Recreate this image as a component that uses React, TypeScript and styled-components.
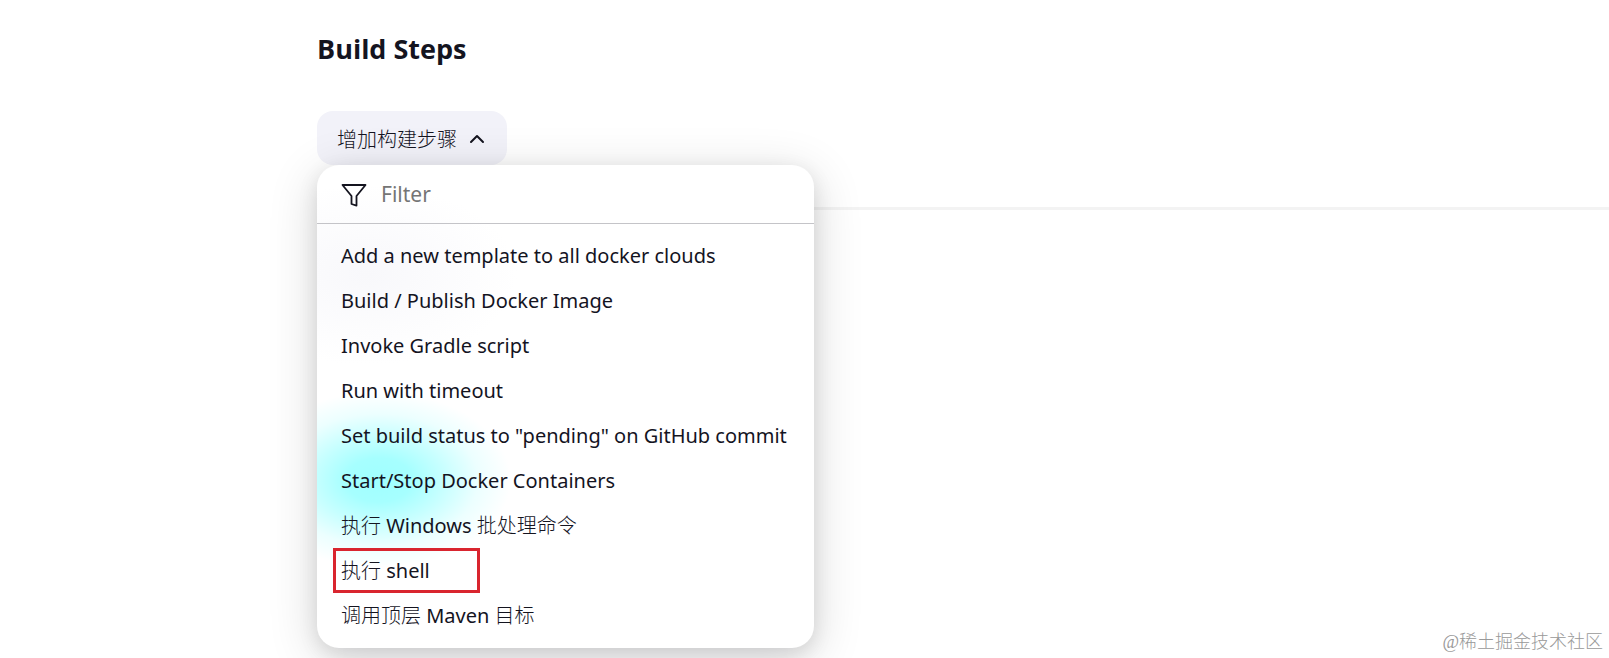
import React, { useState } from "react";
import styled, { createGlobalStyle } from "styled-components";

const GlobalStyle = createGlobalStyle`
  *, *::before, *::after { box-sizing: border-box; }
  body {
    margin: 0;
    background: #ffffff;
    color: #14141f;
    font-family: "Noto Sans", "Noto Sans CJK SC", sans-serif;
    font-size: 20px;
    line-height: 24px;
  }
  button, input { font: inherit; color: inherit; }
`;

const Page = styled.div`
  display: flex;
  flex-direction: column;
  min-height: 100vh;
`;

const Section = styled.section`
  margin-left: 317px;
  padding: 32px 0 42px;
  border-bottom: 3px solid #f3f3f3;
`;

const Title = styled.h2`
  margin: 0 0 45px;
  font-family: "Open Sans", sans-serif;
  font-size: 27px;
  line-height: 34px;
  font-weight: 700;
`;

const Dropdown = styled.div`
  position: relative;
  width: fit-content;
`;

const Trigger = styled.button`
  display: flex;
  align-items: center;
  gap: 12px;
  height: 54px;
  padding: 2px 22px 0 20px;
  border: 0;
  border-radius: 16px;
  background: #f2f2f9;
  cursor: pointer;
`;

const Han = styled.span`
  font-family: "Noto Sans CJK SC", sans-serif;
  font-weight: 300;
`;

const Menu = styled.div`
  position: absolute;
  top: 100%;
  left: 0;
  width: 497px;
  border-radius: 22px;
  background:
    radial-gradient(ellipse 132px 88px at 62px 315px, #a0ffff 0%, #a6ffff 25%, #c8ffff 50%, #ecffff 75%, #ffffff00 100%),
    radial-gradient(ellipse 150px 90px at 50px 110px, #f8f8fb 0%, #ffffff00 100%),
    #ffffff;
  box-shadow: 0 10px 50px rgba(0, 0, 10, 0.16), 0 6px 20px rgba(0, 0, 10, 0.1);
`;

const FilterRow = styled.label`
  display: flex;
  align-items: center;
  gap: 14px;
  height: 59px;
  padding: 0 24px;
  border-bottom: 1px solid #c4c4c8;
`;

const FilterInput = styled.input`
  flex: 1;
  min-width: 0;
  padding: 0;
  border: 0;
  outline: 0;
  background: transparent;
  font-size: 21px;
  &::placeholder { color: #757575; opacity: 1; }
`;

const List = styled.ul`
  margin: 0;
  padding: 9px 16px 10px;
  list-style: none;
`;

const Item = styled.button<{ $marked?: boolean }>`
  display: block;
  height: 45px;
  width: ${(p) => (p.$marked ? "147px" : "100%")};
  padding: 0 5px;
  border: 3px solid ${(p) => (p.$marked ? "#d9252f" : "transparent")};
  background: transparent;
  text-align: left;
  white-space: nowrap;
  cursor: pointer;
`;

const Watermark = styled.footer`
  margin-top: auto;
  padding: 0 6px 4px;
  text-align: right;
  font-family: "Liberation Serif", "Noto Sans CJK SC", serif;
  font-size: 18px;
  font-weight: 300;
  color: #999999;
`;

const steps = [
  "Add a new template to all docker clouds",
  "Build / Publish Docker Image",
  "Invoke Gradle script",
  "Run with timeout",
  'Set build status to "pending" on GitHub commit',
  "Start/Stop Docker Containers",
  "执行 Windows 批处理命令",
  "执行 shell",
  "调用顶层 Maven 目标",
];

const renderLabel = (text: string) =>
  text
    .split(/([\u4e00-\u9fff]+)/)
    .filter(Boolean)
    .map((part, i) => (/[\u4e00-\u9fff]/.test(part) ? <Han key={i}>{part}</Han> : part));

export default function App() {
  const [query, setQuery] = useState("");
  const visible = steps.filter((s) => s.toLowerCase().includes(query.toLowerCase()));
  return (
    <Page>
      <GlobalStyle />
      <Section>
        <Title>Build Steps</Title>
        <Dropdown>
          <Trigger type="button" aria-expanded="true">
            <Han>增加构建步骤</Han>
            <svg width="16" height="10" viewBox="0 0 16 10" fill="none" stroke="#14141f" strokeWidth="2" strokeLinecap="round" strokeLinejoin="round" aria-hidden="true">
              <path d="M2 8 L8 2 L14 8" />
            </svg>
          </Trigger>
          <Menu>
            <FilterRow>
              <svg width="26" height="26" viewBox="0 0 26 26" fill="none" stroke="#14141f" strokeWidth="1.8" strokeLinejoin="round" aria-hidden="true">
                <path d="M1.5 4 H24.5 L15.5 15 V24.6 L10.5 23 V15 Z" />
              </svg>
              <FilterInput aria-label="Filter" placeholder="Filter" value={query} onChange={(e) => setQuery(e.target.value)} />
            </FilterRow>
            <List>
              {visible.map((s) => (
                <li key={s}>
                  <Item type="button" $marked={s === "执行 shell"}>{renderLabel(s)}</Item>
                </li>
              ))}
            </List>
          </Menu>
        </Dropdown>
      </Section>
      <Watermark>@稀土掘金技术社区</Watermark>
    </Page>
  );
}
